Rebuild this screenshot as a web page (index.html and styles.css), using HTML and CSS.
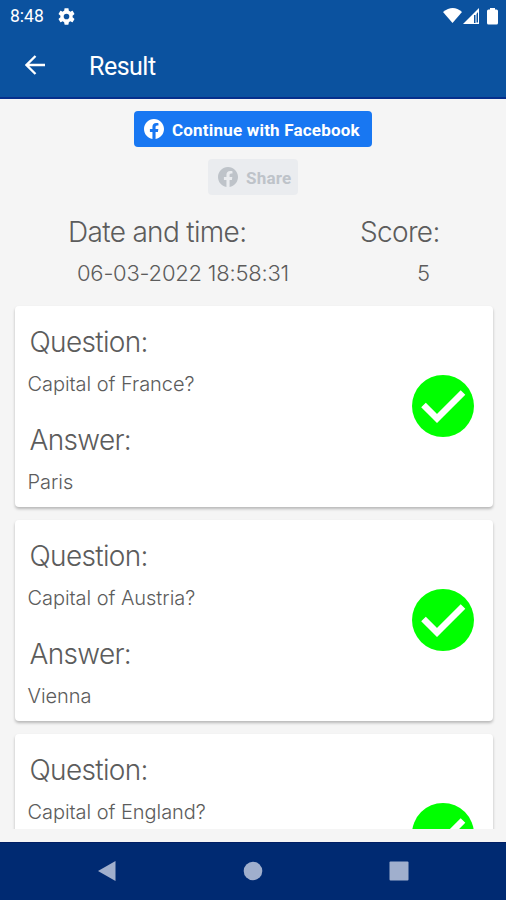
FILE: index.html
```html
<!DOCTYPE html>
<html lang="en">
<head>
<meta charset="utf-8">
<title>Result</title>
<link rel="stylesheet" href="styles.css">
</head>
<body>
<svg class="defs" width="0" height="0">
  <symbol id="check" viewBox="0 0 62 62"><circle cx="31" cy="31" r="31" fill="#0f0"/><path d="M11.5 30 25 43.500 51 17.500" fill="none" stroke="#fff" stroke-width="6.5"/></symbol>
  <symbol id="fb" viewBox="0 0 24 24"><path fill="currentColor" d="M24 12.07C24 5.4 18.63 0 12 0S0 5.4 0 12.07c0 6.03 4.39 11.02 10.13 11.93v-8.44H7.08v-3.49h3.05V9.41c0-3.02 1.79-4.69 4.53-4.69 1.31 0 2.68.24 2.68.24v2.97h-1.51c-1.49 0-1.95.93-1.95 1.89v2.25h3.32l-.53 3.49h-2.79V24C19.61 23.09 24 18.1 24 12.07z"/></symbol>
</svg>
<div class="screen">
  <header class="top">
    <div class="status">
      <span class="clock">8:48</span>
      <svg class="gear" viewBox="2 2 20 20"><path fill="#fff" d="M19.14 12.94c.04-.3.06-.61.06-.94s-.02-.64-.07-.94l2.03-1.58c.18-.14.23-.41.12-.61l-1.92-3.32c-.12-.22-.37-.29-.59-.22l-2.39.96c-.5-.38-1.03-.7-1.62-.94l-.36-2.54c-.04-.24-.24-.41-.48-.41h-3.84c-.24 0-.43.17-.47.41l-.36 2.54c-.59.24-1.13.57-1.62.94l-2.39-.96c-.22-.08-.47 0-.59.22L2.74 8.87c-.12.21-.08.47.12.61l2.03 1.58c-.05.3-.09.63-.09.94s.02.64.07.94l-2.03 1.58c-.18.14-.23.41-.12.61l1.92 3.32c.12.22.37.29.59.22l2.39-.96c.5.38 1.03.7 1.62.94l.36 2.54c.05.24.24.41.48.41h3.84c.24 0 .44-.17.47-.41l.36-2.54c.59-.24 1.13-.56 1.62-.94l2.39.96c.22.08.47 0 .59-.22l1.92-3.32c.12-.22.07-.47-.12-.61zM12 15.3a3.3 3.3 0 1 1 0-6.6 3.3 3.3 0 0 1 0 6.6z"/></svg>
      <svg class="signals" viewBox="0 0 56 18"><g fill="#fff"><path d="M0 5Q10-3 19 5L9.500 16z"/><path fill-rule="evenodd" d="M20 17 36 1V17zM31 8v8h1.500V8zM33.500 7v8.500H35V5z"/><path d="M44 4q0-1.500 1.500-1.500H47V1h5v1.500h1.500Q55 2.500 55 4v12q0 1.500-1.500 1.500h-8Q44 17.500 44 16z"/></g></svg>
    </div>
    <div class="bar">
      <svg class="back" viewBox="0 0 20 20"><path d="M20 10H2M10.500 1 1.500 10l9 9" fill="none" stroke="#fff" stroke-width="2.300"/></svg>
      <h1>Result</h1>
    </div>
  </header>
  <main>
    <button class="btn login"><svg><use href="#fb"/></svg><span>Continue with Facebook</span></button>
    <button class="btn share"><svg><use href="#fb"/></svg><span>Share</span></button>
    <section class="summary">
      <div class="date"><h2>Date and time:</h2><p>06-03-2022 18:58:31</p></div>
      <div class="score"><h2>Score:</h2><p>5</p></div>
    </section>
    <div class="list">
      <article class="card"><div><h2>Question:</h2><p>Capital of France?</p><h2>Answer:</h2><p>Paris</p></div><svg class="check"><use href="#check"/></svg></article>
      <article class="card"><div><h2>Question:</h2><p>Capital of Austria?</p><h2>Answer:</h2><p>Vienna</p></div><svg class="check"><use href="#check"/></svg></article>
      <article class="card"><div><h2>Question:</h2><p>Capital of England?</p></div><svg class="check"><use href="#check"/></svg></article>
    </div>
  </main>
  <nav>
    <svg viewBox="0 0 20 22"><path d="M1 11 18.500 1v20z"/></svg>
    <svg viewBox="0 0 20 22"><circle cx="10" cy="11" r="9.300"/></svg>
    <svg viewBox="0 0 20 22"><rect x=".5" y="1.500" width="19" height="19" rx="1"/></svg>
  </nav>
</div>
</body>
</html>
```
FILE: styles.css
```css
* { box-sizing: border-box; }
body { margin: 0; background: #f5f5f5; color: #5c5c5c; font-family: Inter, sans-serif; }
h1, h2, p { margin: 0; font-weight: 300; white-space: nowrap; }
svg { display: block; flex: none; }
.defs { position: absolute; }
.screen { width: 506px; height: 900px; display: flex; flex-direction: column; overflow: hidden; }
.top { height: 99px; flex: none; background: #0b529f; border-bottom: 2px solid #062f8c; color: #fff; font-family: Roboto, sans-serif; }
.status { height: 32px; display: flex; align-items: center; padding: 0 7px 0 10px; }
.clock { width: 48px; font-size: 17.500px; line-height: 32px; }
.gear { width: 17px; height: 17px; }
.signals { width: 56px; height: 18px; margin-left: auto; }
.bar { height: 65px; display: flex; align-items: center; padding-left: 25px; }
.back { width: 20px; height: 20px; }
.bar h1 { margin-left: 44px; font-size: 25px; letter-spacing: -.5px; font-weight: 400; line-height: 30px; padding-top: 4px; }
main { height: 730px; flex: none; display: flex; flex-direction: column; align-items: center; padding-top: 12px; overflow: hidden; }
.btn { display: flex; flex: none; align-items: center; border: 0; border-radius: 4px; padding: 0 0 0 10px; height: 36px; font: 700 17px/36px Roboto, sans-serif; letter-spacing: .2px; white-space: nowrap; }
.btn span { padding-top: 2px; }
.btn svg { width: 20px; height: 20px; margin-right: 8px; }
.login { width: 238px; background: #1877f2; color: #fff; }
.share { width: 90px; margin-top: 12px; background: #eaecef; color: #bec3c9; }
.summary { flex: none; width: 506px; height: 110.500px; display: flex; padding-top: 19px; }
.summary h2 { height: 36px; }
.date { width: 360px; padding-left: 68px; }
.date p { padding-left: 9px; letter-spacing: -.22px; }
.score p { padding-left: 57px; }
h2 { font-size: 28px; line-height: 36px; letter-spacing: -.67px; }
.summary p { font-size: 22px; line-height: 30px; padding-top: 8px; }
.list { width: 478px; display: flex; flex-direction: column; gap: 13px; margin-left: 1px; }
.card { width: 478px; height: 201.200px; flex: none; background: #fff; border-radius: 4px; box-shadow: 0 2px 3px rgba(0,0,0,.25); padding: 18px 19px 0 13px; display: flex; justify-content: space-between; }
.card h2 { padding-left: 2px; }
.card p { font-size: 20px; line-height: 26px; margin: 11px 0 25px; letter-spacing: -.05px; }
.check { width: 62px; height: 62px; margin-top: 51px; }
nav { height: 58px; margin-top: auto; flex: none; background: #002a72; border-top: 1px solid #001e64; display: flex; justify-content: space-between; align-items: center; padding: 0 97px; }
nav svg { width: 20px; height: 22px; fill: #a0afcd; position: relative; top: -1px; }
```
